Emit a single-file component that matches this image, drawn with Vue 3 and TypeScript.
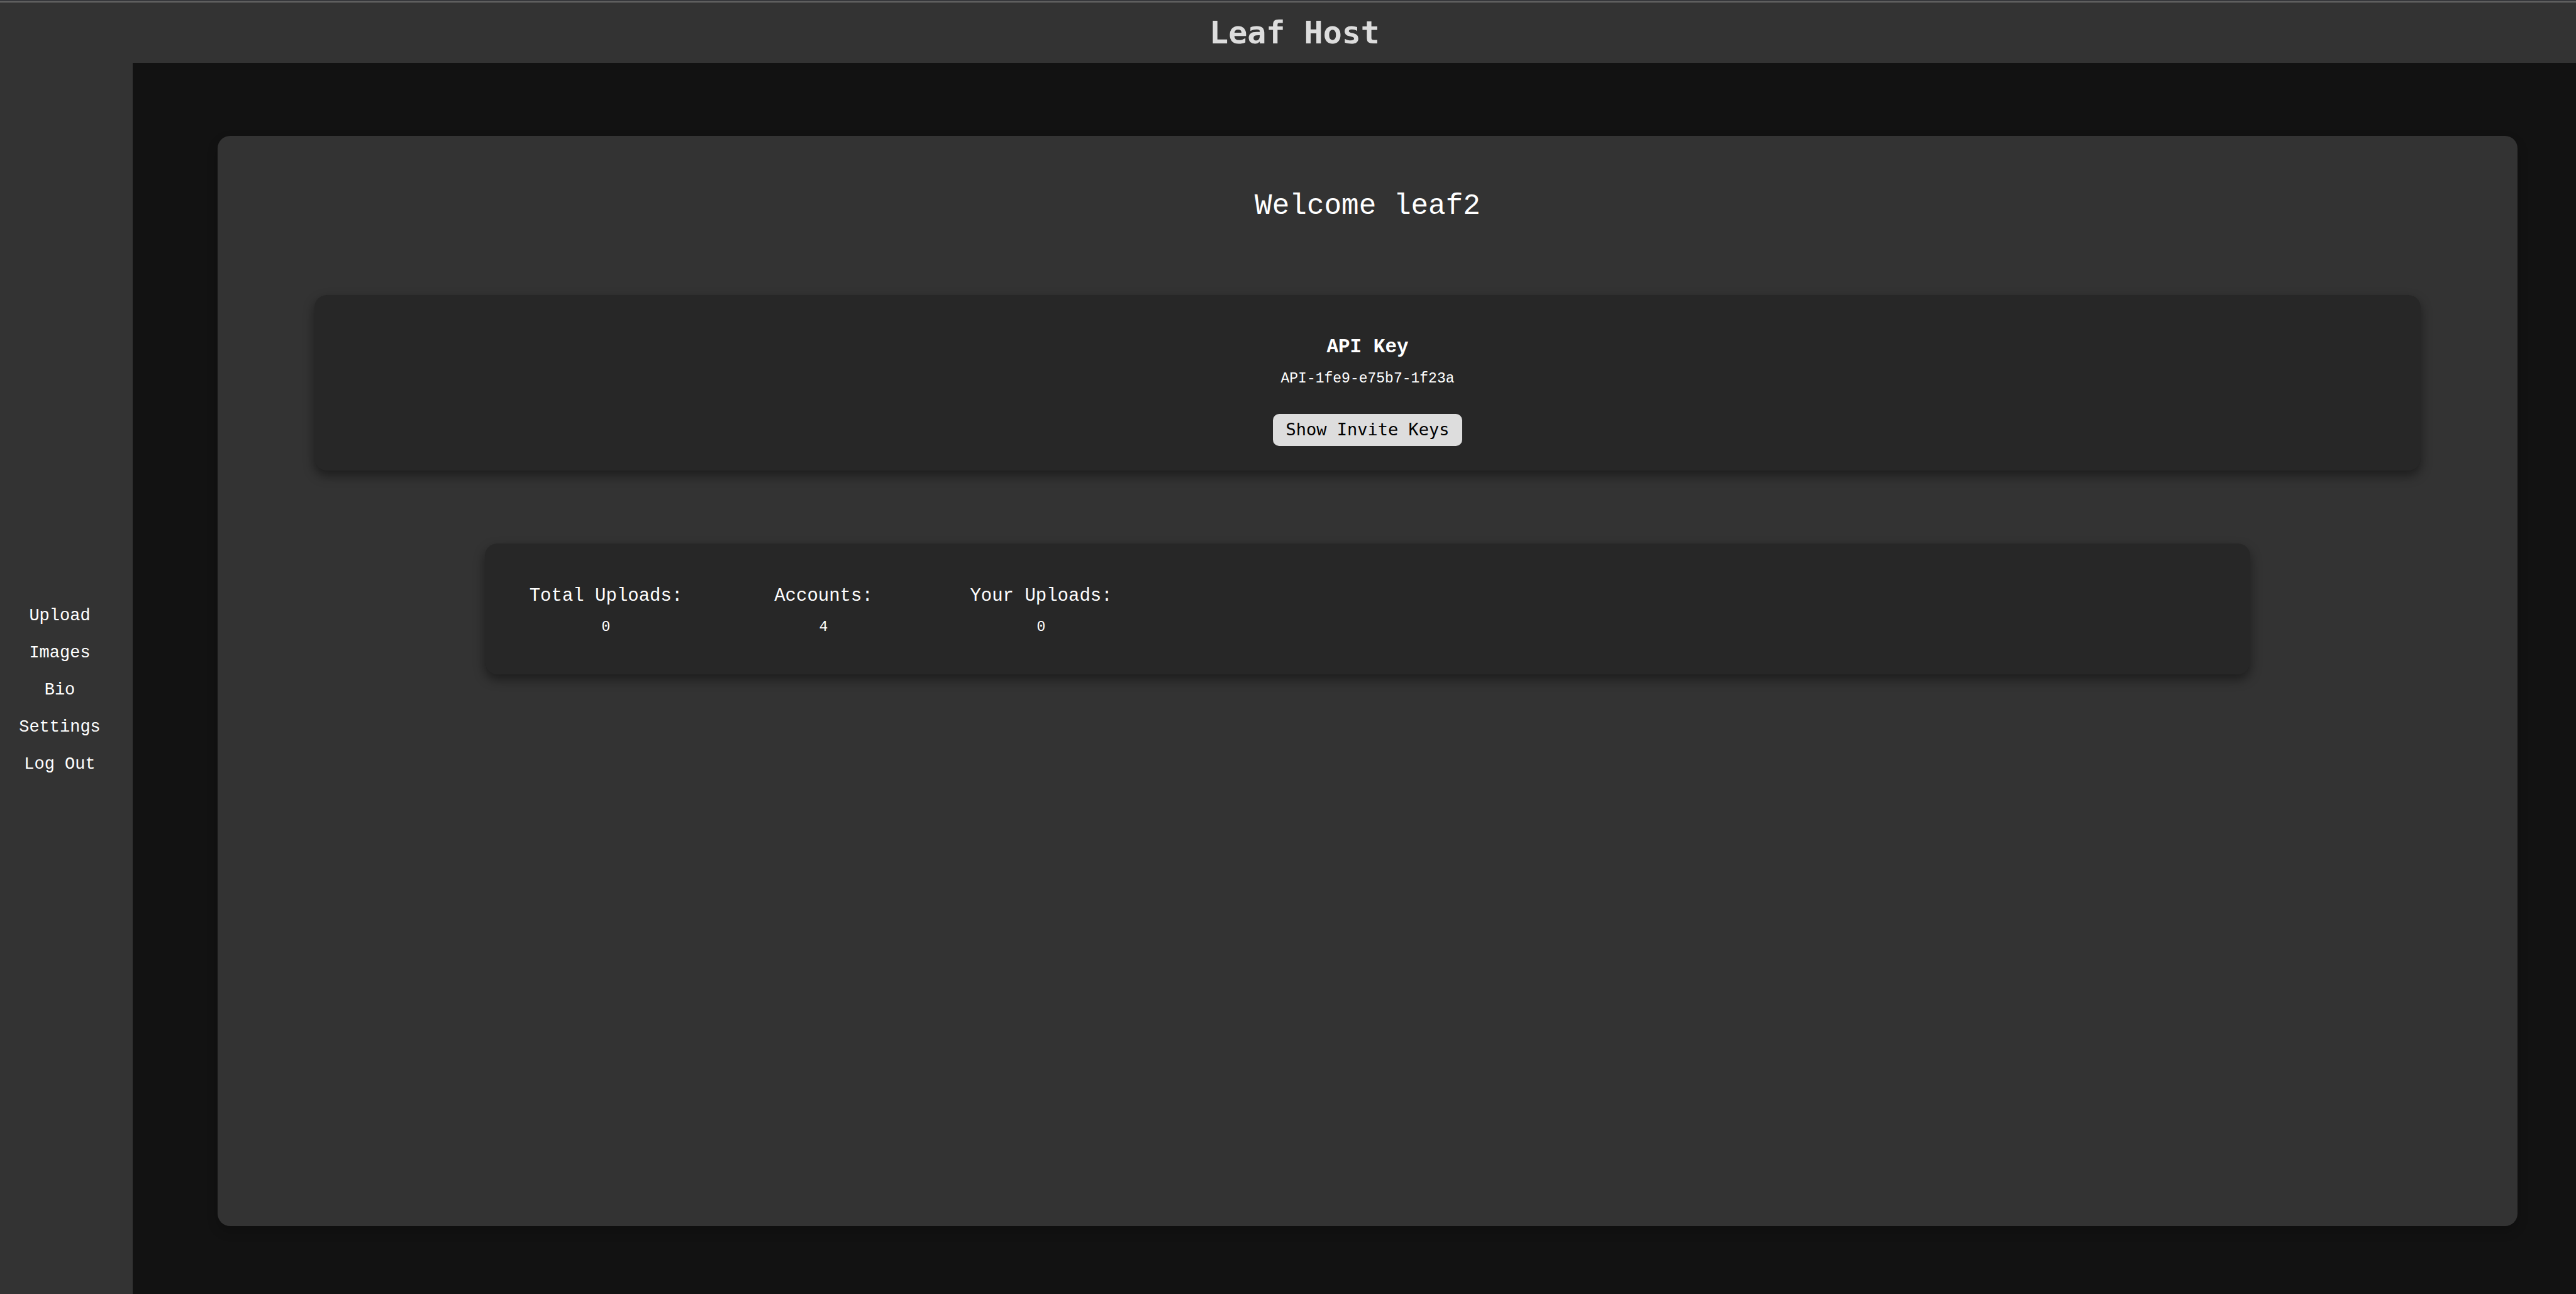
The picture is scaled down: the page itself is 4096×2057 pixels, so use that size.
<script setup lang="ts">
interface Stat {
  label: string
  value: number
}

const username = 'leaf2'
const apiKey = 'API-1fe9-e75b7-1f23a'
const links: string[] = ['Upload', 'Images', 'Bio', 'Settings', 'Log Out']
const stats: Stat[] = [
  { label: 'Total Uploads:', value: 0 },
  { label: 'Accounts:', value: 4 },
  { label: 'Your Uploads:', value: 0 },
]
</script>

<template>
  <div class="app">
    <header class="topbar">
      <h1 class="brand">Leaf Host</h1>
    </header>
    <div class="body">
      <nav class="sidebar">
        <a v-for="link in links" :key="link" class="nav-link" href="#">{{ link }}</a>
      </nav>
      <main class="content">
        <section class="panel">
          <h2 class="welcome">Welcome {{ username }}</h2>
          <div class="card api-card">
            <h3 class="api-title">API Key</h3>
            <p class="api-key">{{ apiKey }}</p>
            <button class="invite-button" type="button">Show Invite Keys</button>
          </div>
          <div class="card stats-card">
            <div v-for="stat in stats" :key="stat.label" class="stat">
              <p class="stat-label">{{ stat.label }}</p>
              <p class="stat-value">{{ stat.value }}</p>
            </div>
          </div>
        </section>
      </main>
    </div>
  </div>
</template>

<style>
body {
  margin: 0;
  background: #121212;
}
</style>

<style scoped>
.app {
  display: flex;
  flex-direction: column;
  min-height: 100vh;
  color: #fff;
  background: #121212;
  font-family: "Liberation Mono", "Courier New", monospace;
}

h1,
h2,
h3,
p {
  margin: 0;
}

.topbar {
  box-sizing: border-box;
  padding: 19px 0 17px 21px;
  border-top: 2px solid #37383c;
  box-shadow: inset 0 2px #646464;
  background: #333;
  text-align: center;
}

.brand {
  color: #ddd;
  font-family: "DejaVu Sans Mono", monospace;
  font-size: 50px;
  font-weight: 700;
  line-height: 62px;
}

.body {
  display: flex;
  flex: 1;
}

.sidebar {
  display: flex;
  flex-direction: column;
  justify-content: center;
  box-sizing: border-box;
  width: 211px;
  padding: 38px 21px 0 0;
  background: #333;
  text-align: center;
}

.nav-link {
  color: #fff;
  font-size: 27px;
  line-height: 59px;
  text-decoration: none;
}

.content {
  display: flex;
  flex: 1;
  padding: 116px 93px 108px 135px;
}

.panel {
  flex: 1;
  padding: 82px 154px;
  border-radius: 20px;
  background: #333;
  box-shadow: 0 8px 18px rgba(0, 0, 0, 0.2);
  text-align: center;
}

.welcome {
  margin-bottom: 111px;
  font-size: 46px;
  font-weight: 400;
  line-height: 60px;
}

.card {
  border-radius: 20px;
  background: #272727;
  box-shadow: 0 8px 18px rgba(0, 0, 0, 0.45);
}

.api-card {
  padding: 65px 39px 39px;
}

.api-title {
  margin-bottom: 18px;
  font-size: 31px;
  font-weight: 700;
  line-height: 36px;
}

.api-key {
  margin-bottom: 42px;
  font-size: 23px;
  line-height: 28px;
}

.invite-button {
  display: block;
  margin: 0 auto;
  padding: 9px 20px 10px;
  border: 0;
  border-radius: 10px;
  background: #ddd;
  color: #000;
  font-family: "DejaVu Sans Mono", monospace;
  font-size: 27px;
  line-height: 32px;
}

.stats-card {
  display: grid;
  grid-template-columns: repeat(auto-fill, minmax(290px, 1fr));
  gap: 39px;
  margin: 116px 271px 0;
  padding: 67px 39px 61px;
}

.stat-label {
  margin-bottom: 18px;
  font-size: 29px;
  line-height: 34px;
}

.stat-value {
  font-size: 23px;
  line-height: 28px;
}
</style>
